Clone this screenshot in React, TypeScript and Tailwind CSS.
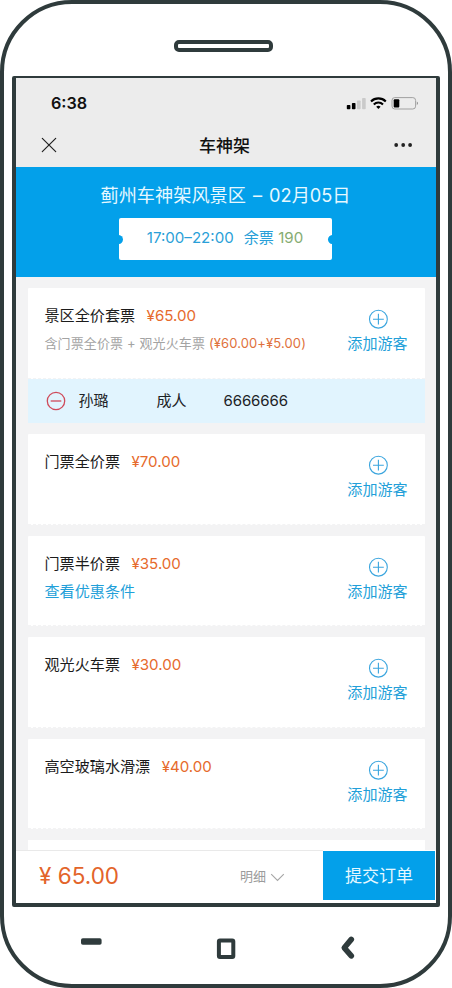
import React from "react";

type Visitor = { name: string; kind: string; idNo: string };

type Ticket = {
  name: string;
  price: string;
  note?: string;
  noteDetail?: string;
  link?: string;
  visitors?: Visitor[];
};

const tickets: Ticket[] = [
  {
    name: "景区全价套票",
    price: "¥65.00",
    note: "含门票全价票 + 观光火车票",
    noteDetail: "(¥60.00+¥5.00)",
    visitors: [{ name: "孙璐", kind: "成人", idNo: "6666666" }],
  },
  { name: "门票全价票", price: "¥70.00" },
  { name: "门票半价票", price: "¥35.00", link: "查看优惠条件" },
  { name: "观光火车票", price: "¥30.00" },
  { name: "高空玻璃水滑漂", price: "¥40.00" },
];

function StatusBar() {
  return (
    <div className="flex h-[50px] items-center justify-between pl-[35px] pr-[17px]">
      <span className="text-[16.2px] font-semibold leading-none text-[#111]">6:38</span>
      <svg width="74" height="14" viewBox="0 0 74 14">
        <rect x="1.8" y="9" width="3.6" height="4.2" rx="0.8" fill="#000" />
        <rect x="6.9" y="7" width="3.6" height="6.2" rx="0.8" fill="#000" />
        <rect x="12" y="4.4" width="3.6" height="8.8" rx="0.8" fill="#cacaca" />
        <rect x="17.1" y="2" width="3.6" height="11.2" rx="0.8" fill="#cacaca" />
        <g fill="none" stroke="#000" strokeWidth="2.1">
          <path d="M26 5.4a10.6 10.6 0 0 1 14.8 0" />
          <path d="M28.8 8.4a6.6 6.6 0 0 1 9.2 0" />
        </g>
        <path d="M33.4 13l-2.2-2.3a3.2 3.2 0 0 1 4.4 0z" fill="#000" />
        <rect x="47" y="1.6" width="23.6" height="11.4" rx="2.8" fill="none" stroke="#a0a0a0" />
        <rect x="48.7" y="3.2" width="5.6" height="8.2" rx="1" fill="#000" />
        <path d="M71.8 5.6c1.6.4 1.6 3 0 3.4z" fill="#909090" />
      </svg>
    </div>
  );
}

function NavBar() {
  return (
    <div className="flex h-[39px] items-center justify-between pb-[6px] pl-[25px] pr-[23px]">
      <svg width="16" height="16" viewBox="0 0 16 16" stroke="#222" strokeWidth="1.2" strokeLinecap="round">
        <path d="M1.3 1.3l13.4 13.4M14.7 1.3L1.3 14.7" />
      </svg>
      <span className="pr-px pt-[3px] text-[17px] font-medium leading-none text-[#111]">车神架</span>
      <svg width="20" height="6" viewBox="0 0 20 6" fill="#222">
        <circle cx="3.2" cy="3" r="1.9" />
        <circle cx="10.2" cy="3" r="1.9" />
        <circle cx="17.1" cy="3" r="1.9" />
      </svg>
    </div>
  );
}

function Banner() {
  return (
    <div className="flex h-[110px] shrink-0 flex-col items-center bg-[#03a0ea] pt-[15px]">
      <h1 className="whitespace-nowrap pr-px text-[18.2px] leading-[26px] text-[#e6f8ff]">
        蓟州车神架风景区<span className="px-[7px]">–</span>02月05日
      </h1>
      <div className="relative mt-[10px] mr-px flex h-[42px] w-[213px] items-center justify-center gap-[10px] overflow-hidden rounded-[2px] bg-white pb-px pr-px text-[15.1px] text-[#2a9fd8]">
        <span className="absolute -left-[5px] top-[17px] h-[9px] w-[9px] rounded-full bg-[#03a0ea]" />
        <span>17:00–22:00</span>
        <span>
          余票 <span className="text-[#86ac72]">190</span>
        </span>
        <span className="absolute -right-[5px] top-[17px] h-[9px] w-[9px] rounded-full bg-[#03a0ea]" />
      </div>
    </div>
  );
}

function AddVisitor() {
  return (
    <button className="flex w-[62px] flex-col items-center text-[#229fd9]">
      <svg width="20" height="20" viewBox="0 0 20 20" fill="none" stroke="#3aa5de" strokeWidth="1.1">
        <circle cx="10.4" cy="10.2" r="8.9" />
        <path d="M5 10.2h10.8M10.4 4.8v10.8" />
      </svg>
      <span className="mt-[4px] whitespace-nowrap text-[15.1px] leading-[22px]">添加游客</span>
    </button>
  );
}

function TicketCard({ ticket }: { ticket: Ticket }) {
  return (
    <div>
      <div className="flex h-[90.5px] justify-between rounded-t-[1px] border-b border-dashed border-[#f3f3f4] bg-white pl-[17px] pr-[16px]">
        <div className="pt-[16px]">
          <div className="flex items-baseline gap-[11.5px] text-[15.1px] leading-[23px]">
            <span className="text-[#1c1c1c]">{ticket.name}</span>
            <span className="text-[#e66a2c]">{ticket.price}</span>
          </div>
          {ticket.note && (
            <div className="mt-[6px] whitespace-nowrap text-[13px] leading-[20px] tracking-[0.12px] text-[#a3a3a3]">
              {ticket.note} <span className="text-[#e0713c]">{ticket.noteDetail}</span>
            </div>
          )}
          {ticket.link && (
            <a className="mt-[5px] block text-[15.1px] leading-[23px] text-[#229fd9]">{ticket.link}</a>
          )}
        </div>
        <div className="pt-[21px]">
          <AddVisitor />
        </div>
      </div>
      {ticket.visitors?.map((v) => (
        <div key={v.name} className="flex h-[44.5px] items-center bg-[#e1f4fe] pl-[18.5px] text-[15px] text-[#1c2226]">
          <svg width="20" height="20" viewBox="0 0 20 20" fill="none" stroke="#cf4a5a" strokeWidth="1.3">
            <circle cx="10" cy="10" r="8.7" />
            <path d="M4.7 10h10.6" />
          </svg>
          <span className="ml-[12.5px] w-[78px]">{v.name}</span>
          <span className="w-[67px]">{v.kind}</span>
          <span className="tracking-[-0.1px]">{v.idNo}</span>
        </div>
      ))}
    </div>
  );
}

function Footer() {
  return (
    <div className="flex h-[53px] shrink-0 bg-white">
      <div className="flex h-[50px] flex-1 items-center border-t-[1.5px] border-[#e9e9e9] pl-[23px] pt-[2px]">
        <span className="w-[201px] text-[22.5px] leading-none text-[#e3642a]">¥ 65.00</span>
        <span className="text-[13px] leading-none text-[#9b9b9b]">明细</span>
        <svg className="ml-[4px] mt-[2px]" width="15" height="9" viewBox="0 0 15 9" fill="none" stroke="#a6a6a6" strokeWidth="1.1">
          <path d="M1.2 1.2l6.3 6.2 6.3-6.2" />
        </svg>
      </div>
      <button className="mr-px mt-px h-[49px] w-[112px] bg-[#03a0ea] pt-[3px] text-[17px] text-[#e6f8ff]">提交订单</button>
    </div>
  );
}

function PhoneKeys() {
  return (
    <div className="flex h-[77px] items-center">
      <svg width="444" height="77" viewBox="0 0 444 77" fill="none" stroke="#2f3b3c">
        <rect x="77" y="31.3" width="20.6" height="6.4" rx="1.8" fill="#2f3b3c" stroke="none" />
        <rect x="214.9" y="33.4" width="14.4" height="16.6" rx="1" strokeWidth="4" strokeLinejoin="round" />
        <path d="M347.3 32.4l-7 8.4 7 8" strokeWidth="5.6" strokeLinecap="round" strokeLinejoin="round" />
      </svg>
    </div>
  );
}

export default function App() {
  return (
    <div className="flex h-[988px] w-[452px] flex-col overflow-hidden rounded-[72px] border-4 border-[#2f3b3c] bg-white font-['Inter','Noto_Sans_CJK_SC',sans-serif]">
      <div className="flex h-[72px] shrink-0 pl-[170px]">
        <div className="mt-[36px] h-[12px] w-[99px] rounded-[5px] border-4 border-[#2f3b3c]" />
      </div>
      <div className="mx-[8px] flex h-[831px] shrink-0 flex-col overflow-hidden rounded-[2px] border-4 border-t-2 border-[#2f3b3c] bg-[#f3f3f4]">
        <div className="h-[89px] shrink-0 bg-[#ececec]">
          <StatusBar />
          <NavBar />
        </div>
        <Banner />
        <div className="flex min-h-0 flex-1 flex-col gap-[11px] overflow-hidden pl-[11.5px] pr-[11.5px] pt-[11px]">
          {tickets.map((t) => (
            <TicketCard key={t.name} ticket={t} />
          ))}
          <div className="h-[20px] shrink-0 bg-white" />
        </div>
        <Footer />
      </div>
      <PhoneKeys />
    </div>
  );
}
